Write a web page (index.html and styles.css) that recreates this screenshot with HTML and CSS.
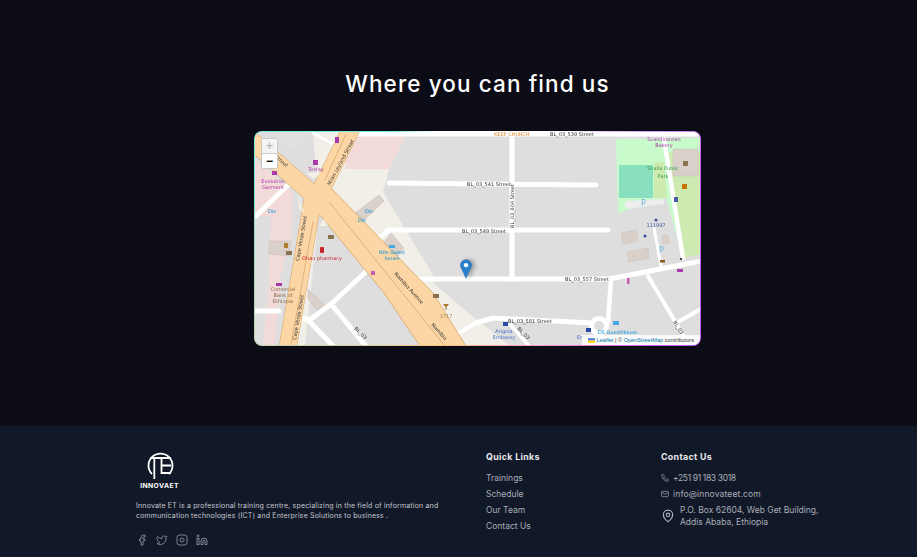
FILE: index.html
```html
<!DOCTYPE html>
<html lang="en">

<head>
  <meta charset="UTF-8">
  <meta name="viewport" content="width=device-width, initial-scale=1.0">
  <title>Innovate ET</title>
  <link rel="stylesheet" href="styles.css">
</head>

<body>
  <main class="location">
    <h1 class="location-title">Where you can find us</h1>

    <div class="map-frame">
      <div class="map">
        <svg class="map-tiles" viewBox="0 0 445 213" width="445" height="213">
          <rect width="445" height="213" fill="#dfdede" />

          <!-- land use -->
          <polygon points="24,0 58,0 40,18 28,10" fill="#e2e0de" />
          <polygon points="58,0 100,0 90,37 134,37 128,60 178,143 178,151 221,187 254,213 165,213 70,74 62,50" fill="#f2efe9" />
          <polygon points="91,4 151,4 134,37 90,37" fill="#f2dad9" />
          <polygon points="0,28 38,60 36,110 26,140 20,213 8,213 14,150 16,84 0,84" fill="#f2dad9" />
          <polygon points="38,213 52,100 62,100 50,213" fill="#f2efe9" />
          <polygon points="361,7 446,6 446,122 428,126 411,66 363,81" fill="#c8facc" />
          <polygon points="412,20 446,20 446,122 428,126" fill="#cdebb0" />
          <polygon points="399,30 409,30 412,66 399,66" fill="#cdebb0" />
          <rect x="364" y="33" width="34" height="33" fill="#88e0be" />
          <path d="M364 49H398" stroke="#7fd4b2" stroke-width=".5" />

          <!-- buildings -->
          <g fill="#d9d0c9" stroke="#cabfb6" stroke-width=".5">
            <polygon points="124,63 129,69 103,94 96,84" />
            <polygon points="126,114 136,101 149,116 139,129" />
            <polygon points="14,109 36,109 34,124 14,122" />
            <polygon points="53,157 71,174 63,179 53,167" />
            <polygon points="366,101 381,98 383,109 368,112" />
            <polygon points="372,120 393,116 394,126 374,130" />
            <polygon points="407,104 413,103 414,111 408,112" />
            <rect x="418" y="17" width="25" height="27" />
          </g>
          <polygon points="370,69 409,67 409,72 371,77" fill="#eeeeee" />

          <!-- minor roads -->
          <g fill="none" stroke="#fff" stroke-width="5" stroke-linecap="round" stroke-linejoin="round">
            <path d="M90 2H445" />
            <path d="M134 51L341 53" />
            <path d="M118 111L134 98H353" />
            <path d="M257 3V147" />
            <path d="M151 147H354L446 129" />
            <path d="M118 111L114 137L76 172L56 187H48" />
            <path d="M1 179H24" />
            <path d="M76 172L111 214" />
            <path d="M54 189L78 214" />
            <path d="M1 84L34 52" />
            <path d="M58 1L78 12" stroke-width="3" />
            <path d="M356 147L353 191" stroke-width="4.500" />
            <path d="M221 191L238 186L338 191" />
            <path d="M254 191L274 214" stroke-width="3.500" />
            <path d="M409 7L428 126" stroke-width="4.500" />
            <path d="M399 96L406 134" stroke-width="3" />
            <path d="M393 144L421 191L434 214" stroke-width="4" />
            <path d="M421 191L446 177" stroke-width="4" />
            <path d="M204 201L221 191" stroke-width="4" />
          </g>
          <circle cx="344" cy="194" r="7.500" fill="#dfdede" stroke="#fff" stroke-width="5" />

          <!-- main roads -->
          <g fill="none" stroke="#d3a568" stroke-width="18">
            <path d="M-4 8L62 66" />
            <path d="M97 -5L62 66" />
            <path d="M58 66L32 220" />
          </g>
          <polygon points="56,72 129,161 165,214 211,214 178,161 76,56" fill="#fcd6a4" stroke="#d3a568" stroke-width=".8" />
          <g fill="none" stroke="#fcd6a4" stroke-width="17">
            <path d="M-4 8L62 66" />
            <path d="M97 -5L62 66" />
            <path d="M58 66L32 220" />
          </g>
          <polygon points="52,70 70,52 90,74 66,84" fill="#fcd6a4" />
          <g fill="none" stroke="#c99a5e" stroke-width=".6">
            <path d="M58 90L36 213" />
            <path d="M74 70L190 214" />
            <path d="M91 2L70 48" />
          </g>
          <polygon points="43,62 49,81 44,77" fill="#f2efe9" />
          <polygon points="69,87 73,94 64,94" fill="#f2efe9" />
          <polygon points="51,41 66,41 59,47" fill="#f2efe9" />

          <!-- street labels -->
          <g class="label-road">
            <text transform="translate(75 54) rotate(-62)">Milan Leyland Street</text>
            <text transform="translate(44 129) rotate(-80)">Cape Verde Street</text>
            <text transform="translate(41 208) rotate(-80)">Cape Verde Street</text>
            <text transform="translate(14 20) rotate(42)">ue Street</text>
            <text transform="translate(139 142) rotate(48)">Namibia Avenue</text>
            <text transform="translate(176 193) rotate(48)">Namibia</text>
            <text x="212" y="54">BL_03_541 Street</text>
            <text x="207" y="101">BL_03_549 Street</text>
            <text x="310" y="149">BL_03_557 Street</text>
            <text x="295" y="4">BL_03_539 Street</text>
            <text x="253" y="191">BL_03_581 Street</text>
            <text transform="translate(259 96) rotate(-90)">BL_03_604 Street</text>
            <text transform="translate(99 197) rotate(45)">BL_03</text>
            <text transform="translate(418 190) rotate(58)">BL_03</text>
            <text transform="translate(262 197) rotate(45)">BL_03</text>
          </g>

          <!-- poi labels -->
          <g class="label-poi">
            <text x="239" y="4" fill="#d98a2b">KEEP CHURCH</text>
            <text x="61" y="39" fill="#ac39ac" text-anchor="middle">Tesfay</text>
            <text x="18" y="51" fill="#ac39ac" text-anchor="middle">Evolution</text>
            <text x="18" y="57" fill="#ac39ac" text-anchor="middle">Garment</text>
            <text x="67" y="128" fill="#c6232b" text-anchor="middle">Ohao pharmacy</text>
            <text x="28" y="159" fill="#8a6a4a" text-anchor="middle">Comercial</text>
            <text x="28" y="165" fill="#8a6a4a" text-anchor="middle">Bank of</text>
            <text x="28" y="171" fill="#8a6a4a" text-anchor="middle">Ethiopia</text>
            <text x="137" y="122" fill="#0092da" text-anchor="middle">Nile Guest</text>
            <text x="137" y="128" fill="#0092da" text-anchor="middle">house</text>
            <text x="17" y="81" fill="#0092da" text-anchor="middle">Dis</text>
            <text x="114" y="81" fill="#0092da" text-anchor="middle">Dis</text>
            <text x="107" y="90" fill="#0092da" text-anchor="middle">Dis</text>
            <text x="191" y="186" fill="#a58a55" text-anchor="middle">1717</text>
            <text x="409" y="9" fill="#ac39ac" text-anchor="middle">Scandinavian</text>
            <text x="409" y="15" fill="#ac39ac" text-anchor="middle">Bakery</text>
            <text x="408" y="38" fill="#3a9a4a" text-anchor="middle">Shalla Public</text>
            <text x="408" y="46" fill="#3a9a4a" text-anchor="middle">Park</text>
            <text x="401" y="95" fill="#4a5aa8" text-anchor="middle">111997</text>
            <text x="249" y="201" fill="#4a6cc8" text-anchor="middle">Angola</text>
            <text x="249" y="207" fill="#4a6cc8" text-anchor="middle">Embassy</text>
            <text x="326" y="207" fill="#4a6cc8" text-anchor="middle">Em</text>
            <text x="343" y="202" fill="#0092da">DS GuestHouse</text>
          </g>

          <!-- poi symbols -->
          <g class="poi-symbols">
            <rect x="58" y="28" width="5" height="5" fill="#ac39ac" />
            <rect x="80" y="5" width="4" height="6" fill="#ac39ac" />
            <rect x="17" y="39" width="5" height="4" fill="#ac39ac" />
            <rect x="73" y="103" width="6" height="4" fill="#8a7450" />
            <rect x="31" y="119" width="6" height="4" fill="#8a7450" />
            <rect x="29" y="111" width="4" height="5" fill="#b08030" />
            <rect x="65" y="115" width="4" height="6" rx="1" fill="#c6232b" />
            <rect x="21" y="151" width="6" height="3" fill="#ac39ac" />
            <rect x="178" y="162" width="6" height="4" fill="#8a7450" />
            <rect x="116" y="139" width="4" height="4" fill="#c45cb0" />
            <rect x="134" y="113" width="6" height="3" fill="#4aa8e0" />
            <rect x="419" y="65" width="4" height="5" fill="#4a5aa8" />
            <rect x="427" y="52" width="5" height="5" fill="#c77400" />
            <rect x="428" y="29" width="5" height="5" fill="#8a7450" />
            <rect x="422" y="137" width="6" height="3" fill="#ac39ac" />
            <rect x="372" y="146" width="2.500" height="6" fill="#c45cb0" />
            <rect x="405" y="128" width="5" height="2.500" fill="#8a5a20" />
            <rect x="425" y="126" width="2" height="2" fill="#444" />
            <rect x="248" y="190" width="5" height="4" fill="#2a4aa8" />
            <rect x="331" y="196" width="5" height="4" fill="#2a4aa8" />
            <rect x="358" y="189" width="6" height="4" fill="#4aa8e0" />
            <circle cx="401" cy="88" r="1.500" fill="#3a4a9a" />
            <circle cx="390" cy="104" r="1.500" fill="#3a4a9a" />
            <text x="404" y="121" class="label-parking">P</text>
            <text x="386" y="74" class="label-parking">P</text>
            <path d="M188 172h6l-2.500 3v3h-1v-3z" fill="#a5762a" />
          </g>
        </svg>

        <div class="zoom-control">
          <span class="zoom-btn zoom-disabled">+</span>
          <span class="zoom-btn">−</span>
        </div>

        <svg class="map-marker" viewBox="0 0 25 41" width="12" height="20">
          <path d="M12.500 1C6 1 1 6 1 12.500c0 3 1 5 2.500 7.500L12.500 40l9-20c1.500-2.500 2.500-4.500 2.500-7.500C24 6 19 1 12.500 1z" fill="#2a81cb" stroke="#1f6aa8" />
          <circle cx="12.500" cy="12.500" r="4.500" fill="#fff" />
        </svg>

        <div class="attribution">
          <svg class="attribution-flag" viewBox="0 0 12 8" width="7" height="5">
            <rect width="12" height="4" fill="#4c7be1" />
            <rect y="4" width="12" height="4" fill="#ffd500" />
          </svg>
          <a>Leaflet</a> | © <a>OpenStreetMap</a> contributors
        </div>
      </div>
    </div>
  </main>

  <footer class="site-footer">
    <div class="footer-about">
      <div class="brand">
        <svg class="brand-mark" viewBox="0 0 30 30" width="30" height="30">
          <path d="M7 23A12 12 0 1 1 24 23" fill="none" stroke="#fff" stroke-width="1.800" />
          <path d="M5 7H17M9.300 7V28" fill="none" stroke="#fff" stroke-width="1.800" />
          <path d="M26 7H16.500V22H26M16.500 14.500H26" fill="none" stroke="#fff" stroke-width="1.800" />
        </svg>
        <span class="brand-name">INNOVAET</span>
      </div>
      <p class="footer-text">Innovate ET is a professional training centre, specializing in the field of information and communication technologies (ICT) and Enterprise Solutions to business .</p>
      <div class="socials">
        <svg class="icon-social" viewBox="0 0 24 24"><path d="M18 2h-3a5 5 0 0 0-5 5v3H7v4h3v8h4v-8h3l1-4h-4V7a1 1 0 0 1 1-1h3z" /></svg>
        <svg class="icon-social" viewBox="0 0 24 24"><path d="M22 4s-.7 2.100-2 3.400c1.600 10-9.400 17.300-18 11.600 2.200.1 4.400-.6 6-2C3 15.500.5 9.600 3 5c2.200 2.600 5.600 4.100 9 4-.9-4.200 4-6.600 7-3.800 1.100 0 3-1.200 3-1.200z" /></svg>
        <svg class="icon-social" viewBox="0 0 24 24"><rect x="2" y="2" width="20" height="20" rx="5" /><path d="M16 11.370A4 4 0 1 1 12.630 8 4 4 0 0 1 16 11.370z" /><path d="M17.500 6.500h.01" /></svg>
        <svg class="icon-social" viewBox="0 0 24 24"><path d="M16 8a6 6 0 0 1 6 6v7h-4v-7a2 2 0 0 0-2-2 2 2 0 0 0-2 2v7h-4v-7a6 6 0 0 1 6-6z" /><rect x="2" y="9" width="4" height="12" /><circle cx="4" cy="4" r="2" /></svg>
      </div>
    </div>

    <div class="footer-col">
      <h2 class="footer-heading">Quick Links</h2>
      <ul class="footer-links">
        <li>Trainings</li>
        <li>Schedule</li>
        <li>Our Team</li>
        <li>Contact Us</li>
      </ul>
    </div>

    <div class="footer-col">
      <h2 class="footer-heading">Contact Us</h2>
      <ul class="footer-links">
        <li class="contact-row">
          <svg class="icon-contact" viewBox="0 0 24 24"><path d="M22 16.920v3a2 2 0 0 1-2.180 2 19.790 19.790 0 0 1-8.630-3.070 19.500 19.500 0 0 1-6-6 19.790 19.790 0 0 1-3.070-8.670A2 2 0 0 1 4.110 2h3a2 2 0 0 1 2 1.720 12.840 12.840 0 0 0 .7 2.810 2 2 0 0 1-.45 2.110L8.090 9.910a16 16 0 0 0 6 6l1.270-1.270a2 2 0 0 1 2.110-.45 12.840 12.840 0 0 0 2.810.7A2 2 0 0 1 22 16.920z" /></svg>
          <span class="contact-phone">+251 91 183 3018</span>
        </li>
        <li class="contact-row">
          <svg class="icon-contact" viewBox="0 0 24 24"><rect x="2" y="4" width="20" height="16" rx="2" /><path d="m22 7-8.970 5.700a1.940 1.940 0 0 1-2.060 0L2 7" /></svg>
          <span class="contact-mail">info@innovateet.com</span>
        </li>
        <li class="contact-row contact-address">
          <svg class="icon-pin" viewBox="0 0 24 24"><path d="M20 10c0 6-8 12-8 12s-8-6-8-12a8 8 0 0 1 16 0Z" /><circle cx="12" cy="10" r="3" /></svg>
          <span>P.O. Box 62604, Web Get Building,<br>Addis Ababa, Ethiopia</span>
        </li>
      </ul>
    </div>
  </footer>
</body>

</html>
```

FILE: styles.css
```css
/* Page */
body {
  margin: 0;
  height: 557px;
  overflow: hidden;
  display: flex;
  flex-direction: column;
  background: #0c0c16;
  font-family: 'Inter', sans-serif;
  color: #fff;
}

/* Map section */
.location {
  height: 426px;
  box-sizing: border-box;
  padding: 69px 0 0 38px;
  display: flex;
  flex-direction: column;
  align-items: center;
}

.location-title {
  margin: 0;
  font-size: 22.500px;
  line-height: 30px;
  font-weight: 500;
  letter-spacing: 1.100px;
}

.map-frame {
  margin-top: 32px;
  width: 447px;
  height: 215px;
  box-sizing: border-box;
  padding: 1px;
  border-radius: 8px;
  background: conic-gradient(#fff 0deg 40deg, #c45cf0 70deg 120deg, #ff9ec9 150deg, #ffc27a 200deg, #7fe9de 290deg 320deg, #fff 340deg);
}

.map {
  position: relative;
  width: 445px;
  height: 213px;
  border-radius: 7px;
  overflow: hidden;
  background: #dfdede;
}

.map-tiles {
  display: block;
  filter: blur(0.5px);
}

.label-road {
  font-family: 'DejaVu Sans', sans-serif;
  font-size: 5px;
  fill: #333;
}

.label-poi {
  font-family: 'DejaVu Sans', sans-serif;
  font-size: 5px;
}

.label-parking {
  font-family: 'DejaVu Sans', sans-serif;
  font-size: 8px;
  fill: #6fb3de;
}

.zoom-control {
  position: absolute;
  top: 6px;
  left: 6px;
  display: flex;
  flex-direction: column;
  border: 1px solid #c9c9c9;
  border-radius: 2px;
  background: #fff;
}

.zoom-btn {
  width: 15px;
  height: 14px;
  line-height: 14px;
  text-align: center;
  font-family: 'Liberation Sans', sans-serif;
  font-size: 12px;
  font-weight: 700;
  color: #000;
}

.zoom-disabled {
  color: #bbb;
  background: #f4f4f4;
  border-bottom: 1px solid #ccc;
}

.map-marker {
  position: absolute;
  left: 205px;
  top: 127px;
  filter: drop-shadow(3px 0 2px rgba(0, 0, 0, 0.3));
}

.attribution {
  position: absolute;
  right: 0;
  bottom: 0;
  width: 116px;
  height: 10px;
  padding: 0 1px;
  text-align: center;
  background: rgba(255, 255, 255, 0.85);
  font-family: 'Liberation Sans', sans-serif;
  font-size: 5.600px;
  line-height: 10px;
  color: #333;
  white-space: nowrap;
}

.attribution a {
  color: #0078a8;
}

.attribution-flag {
  vertical-align: -0.5px;
}

/* Footer */
.site-footer {
  flex: 1;
  display: grid;
  grid-template-columns: 350px 175px 190px;
  padding: 0 0 0 136px;
  background: #111827;
}

.footer-about {
  padding-top: 25px;
}

.brand {
  width: 47px;
  display: flex;
  flex-direction: column;
  align-items: center;
}

.brand-mark {
  display: block;
}

.brand-name {
  font-size: 6.800px;
  line-height: 9px;
  font-weight: 700;
  letter-spacing: 0.4px;
}

.footer-text {
  margin: 11px 0 0;
  width: 312px;
  font-size: 7px;
  line-height: 10px;
  color: #c4c8d0;
  letter-spacing: 0.17px;
}

.socials {
  margin-top: 13px;
  display: flex;
  gap: 8px;
}

.icon-social {
  width: 12px;
  height: 12px;
  fill: none;
  stroke: #7f8694;
  stroke-width: 2;
}

.footer-col {
  padding-top: 25px;
}

.footer-heading {
  margin: 0 0 7px;
  font-size: 8.800px;
  line-height: 12px;
  font-weight: 700;
  letter-spacing: 0.35px;
  color: #e8eaee;
}

.footer-links {
  margin: 0;
  padding: 0;
  list-style: none;
  font-size: 8.500px;
  line-height: 16px;
  color: #a9aeb9;
}

.contact-row {
  display: flex;
  align-items: center;
  gap: 4px;
}

.contact-phone {
  letter-spacing: -0.35px;
}

.contact-mail {
  letter-spacing: 0.15px;
}

.contact-address {
  line-height: 12px;
  gap: 5px;
  margin-top: 2px;
}

.icon-contact {
  width: 8px;
  height: 8px;
  fill: none;
  stroke: #a9aeb9;
  stroke-width: 2;
}

.icon-pin {
  width: 14px;
  height: 14px;
  fill: none;
  stroke: #a9aeb9;
  stroke-width: 2;
}
```
